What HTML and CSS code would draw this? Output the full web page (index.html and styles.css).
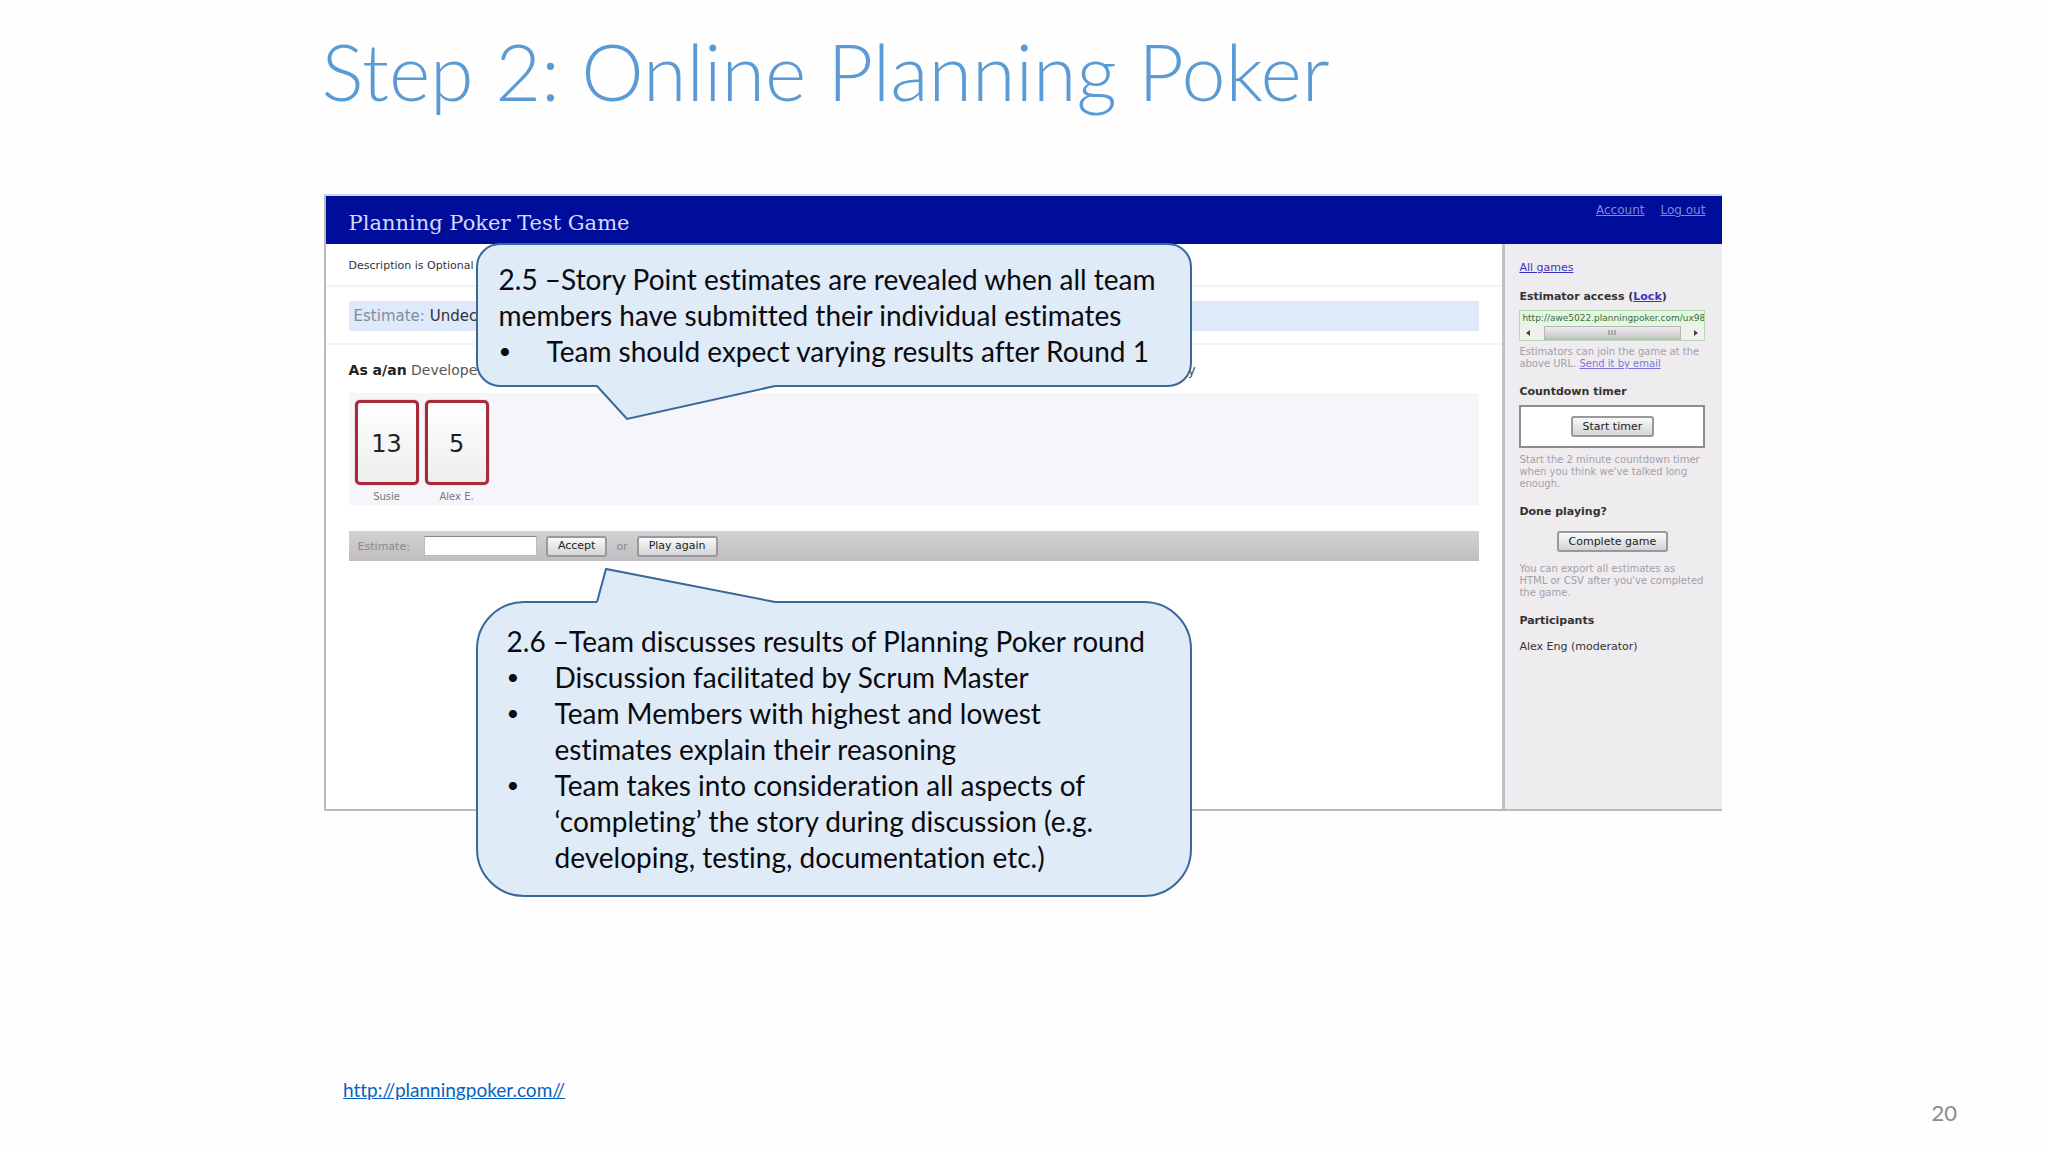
FILE: index.html
```html
<!DOCTYPE html>
<html lang="en">
<head>
    <meta charset="UTF-8">
    <meta name="viewport" content="width=device-width, initial-scale=1.0">
    <title>Step 2: Online Planning Poker</title>
    <link rel="stylesheet" href="styles.css">
</head>
<body>
    <div class="slide">
        <h1 class="slide-title">Step 2: Online Planning Poker</h1>

        <div class="app">
            <header class="app-header">
                <h2>Planning Poker Test Game</h2>
                <nav>
                    <a href="#">Account</a>
                    <a href="#">Log out</a>
                </nav>
            </header>

            <div class="app-body">
                <main class="game">
                    <p class="description">Description is Optional</p>
                    <div class="estimate-row">
                        <p class="estimate"><span>Estimate:</span> Undecided</p>
                    </div>
                    <p class="story"><span><b>As a/an</b> Developer</span><span>y</span></p>
                    <div class="cards">
                        <div class="player">
                            <div class="card">13</div>
                            <div class="name">Susie</div>
                        </div>
                        <div class="player">
                            <div class="card">5</div>
                            <div class="name">Alex E.</div>
                        </div>
                    </div>
                    <form class="result-bar">
                        <label for="estimate">Estimate:</label>
                        <input type="text" id="estimate">
                        <button type="button">Accept</button>
                        <span>or</span>
                        <button type="button">Play again</button>
                    </form>
                </main>

                <aside class="sidebar">
                    <a class="all-games" href="#">All games</a>
                    <h3>Estimator access (<a href="#">Lock</a>)</h3>
                    <div class="url-box">
                        <div class="url">http://awe5022.planningpoker.com/ux98a</div>
                        <div class="scrollbar">
                            <svg width="4" height="6" viewBox="0 0 4 6"><path d="M4 0v6L0 3z" fill="#444"/></svg>
                            <div class="thumb">
                                <svg width="8" height="5" viewBox="0 0 8 5"><path d="M1 0v5M4 0v5M7 0v5" stroke="#777"/></svg>
                            </div>
                            <svg width="4" height="6" viewBox="0 0 4 6"><path d="M0 0v6l4-3z" fill="#444"/></svg>
                        </div>
                    </div>
                    <p class="help">Estimators can join the game at the above URL. <a href="#">Send it by email</a></p>

                    <h3>Countdown timer</h3>
                    <div class="timer"><button type="button">Start timer</button></div>
                    <p class="help">Start the 2 minute countdown timer when you think we've talked long enough.</p>

                    <h3>Done playing?</h3>
                    <div class="complete"><button type="button">Complete game</button></div>
                    <p class="help">You can export all estimates as HTML or CSV after you've completed the game.</p>

                    <h3>Participants</h3>
                    <p class="participant">Alex Eng (moderator)</p>
                </aside>
            </div>

            <div class="callout callout-top">
                <svg class="tail" width="182" height="36" viewBox="0 0 182 36">
                    <path d="M2 0L32 34L180 2V0z" fill="#dfebf7"/>
                    <path d="M2 1L32 34L180 1" fill="none" stroke="#38699a" stroke-width="2"/>
                </svg>
                <p>2.5 –Story Point estimates are revealed when all team members have submitted their individual estimates</p>
                <ul>
                    <li>Team should expect varying results after Round 1</li>
                </ul>
            </div>

            <div class="callout callout-bottom">
                <svg class="tail" width="182" height="36" viewBox="0 0 182 36">
                    <path d="M2 36L11 2L180 34V36z" fill="#dfebf7"/>
                    <path d="M2 35L11 2L180 35" fill="none" stroke="#38699a" stroke-width="2"/>
                </svg>
                <p>2.6 –Team discusses results of Planning Poker round</p>
                <ul>
                    <li>Discussion facilitated by Scrum Master</li>
                    <li>Team Members with highest and lowest estimates explain their reasoning</li>
                    <li>Team takes into consideration all aspects of ‘completing’ the story during discussion (e.g. developing, testing, documentation etc.)</li>
                </ul>
            </div>
        </div>

        <footer class="slide-footer">
            <a href="http://planningpoker.com//">http://planningpoker.com//</a>
            <span class="page-number">20</span>
        </footer>
    </div>
</body>
</html>
```
FILE: styles.css
```css
* {
    box-sizing: border-box;
}
body {
    margin: 0;
    background: #fefefe;
    font-family: Lato, sans-serif;
    font-variant-ligatures: none;
}
h1, h2, h3, p, ul {
    margin: 0;
    padding: 0;
}
.slide {
    display: flex;
    flex-direction: column;
    min-height: 100vh;
}
.slide-title {
    margin: 23px 15.7% 75px;
    font-size: 79px;
    line-height: 96px;
    font-weight: 300;
    color: #5b9bd5;
}

/* game window */
.app {
    position: relative;
    display: flex;
    flex-direction: column;
    min-height: 617px;
    margin: 0 15.9% 0 15.8%;
    border: 2px solid #b9b9bf;
    border-top-color: #cfd6e6;
    border-right: none;
    font-family: "DejaVu Sans", sans-serif;
    font-size: 11px;
    color: #333;
}
.app-header {
    display: flex;
    justify-content: space-between;
    height: 48px;
    padding: 7px 17px 0 23px;
    background: #000c9a;
}
.app-header h2 {
    padding-top: 5px;
    font-family: "DejaVu Serif", serif;
    font-size: 21px;
    line-height: 30px;
    font-weight: normal;
    color: #d5d9fa;
}
.app-header nav {
    display: flex;
    gap: 16px;
    font-size: 12px;
}
.app-header nav a {
    color: #7f88dd;
}
.app-body {
    display: flex;
    flex: 1;
}
.game {
    flex: 1;
    background: #fff;
}
.description {
    padding: 13px 23px 0;
    height: 43px;
    line-height: 18px;
    border-bottom: 2px solid #f3f3f5;
}
.estimate-row {
    padding: 14px 23px 12px;
    border-bottom: 2px solid #f3f3f5;
}
.estimate {
    padding: 0 5px;
    font-size: 15px;
    line-height: 30px;
    background: #deeafc;
}
.estimate span {
    color: #7f8c9c;
}
.story {
    display: flex;
    justify-content: space-between;
    width: 72%;
    margin: 15px 23px 13px;
    font-size: 14px;
    line-height: 20px;
    color: #555;
}
.story b {
    color: #222;
}
.cards {
    display: flex;
    gap: 6px;
    height: 112px;
    margin: 0 23px 26px;
    padding: 7px 6px;
    background: #f6f5f9;
}
.player {
    width: 64px;
    text-align: center;
}
.card {
    height: 85px;
    border: 3px solid #a52a3a;
    border-radius: 5px;
    background: linear-gradient(#fff, #ededed);
    font-size: 24px;
    line-height: 82px;
    color: #222;
    box-shadow: 0 0 1px #a52a3a;
}
.name {
    font-size: 10px;
    line-height: 24px;
    color: #777;
}
.result-bar {
    display: flex;
    align-items: center;
    height: 30px;
    margin: 0 23px;
    padding: 0 9px;
    background: linear-gradient(#d3d1d3, #bfbdbf);
    color: #8a8a8a;
}
.result-bar input {
    width: 113px;
    height: 20px;
    margin: 0 9px 0 14px;
    border: 1px solid #bbb;
    border-top-color: #888;
    background: #fff;
}
.result-bar span {
    margin: 0 9px;
}
button {
    height: 21px;
    padding: 0 10px;
    border: 2px solid #99999d;
    border-radius: 3px;
    background: linear-gradient(#fafafa, #d4d4d6);
    font-family: "DejaVu Sans", sans-serif;
    font-size: 11px;
    line-height: 16px;
    color: #222;
}

/* right column */
.sidebar {
    width: 220px;
    padding: 16px 17px 0 14px;
    border-left: 3px solid #c0c0c6;
    background: #eeecef;
}
.sidebar a {
    color: #3a33c4;
}
.sidebar h3 {
    font-size: 11px;
    line-height: 16px;
    color: #333;
}
.all-games {
    display: block;
    margin-bottom: 13px;
    line-height: 16px;
}
.url-box {
    margin: 5px 0;
    border: 1px solid #b5dcb5;
    background: #e2f8e0;
    overflow: hidden;
}
.url {
    padding-left: 2px;
    font-size: 9px;
    line-height: 14px;
    white-space: nowrap;
    color: #3f6a3f;
}
.scrollbar {
    display: flex;
    align-items: center;
    justify-content: space-between;
    height: 15px;
    padding: 0 6px;
    background: #f0f0ee;
}
.thumb {
    display: flex;
    align-items: center;
    justify-content: center;
    width: 80%;
    height: 14px;
    border: 1px solid #b5b5b5;
    background: linear-gradient(#ededed, #c4c4c4);
}
.help {
    margin-bottom: 14px;
    font-size: 10px;
    line-height: 12px;
    color: #a3a1a6;
}
.sidebar .help a {
    color: #7a75dc;
}
.timer {
    margin: 5px 0 6px;
    padding: 8px;
    border: 2px solid #8c8c90;
    background: #fff;
    text-align: center;
}
.timer button {
    vertical-align: top;
    margin: 1px 0;
}
.complete {
    margin: 11px 0;
    text-align: center;
}
.participant {
    margin-top: 10px;
    line-height: 16px;
}

/* speech bubbles over the window */
.callout {
    position: absolute;
    left: 150px;
    width: 716px;
    border: 2px solid #38699a;
    background: #dfebf7;
    font-family: Lato, sans-serif;
    font-size: 28px;
    line-height: 36px;
    color: #0a0a0f;
}
.callout-top {
    top: 47px;
    padding: 16px 21px;
    border-radius: 24px;
}
.callout-bottom {
    top: 405px;
    padding: 20px 29px;
    border-radius: 48px;
}
.callout ul {
    list-style: none;
}
.callout li {
    display: flex;
}
.callout li::before {
    content: "•";
    flex: 0 0 48px;
    font-size: 22px;
}
.tail {
    position: absolute;
    left: 117px;
}
.callout-top .tail {
    top: 100%;
}
.callout-bottom .tail {
    bottom: 100%;
}

.slide-footer {
    display: flex;
    justify-content: space-between;
    margin-top: auto;
    padding: 0 91px 24px 16.75%;
}
.slide-footer a {
    font-size: 19px;
    line-height: 24px;
    color: #0563c1;
}
.page-number {
    padding-top: 20px;
    font-size: 22px;
    line-height: 30px;
    color: #8b8b8b;
}
```
